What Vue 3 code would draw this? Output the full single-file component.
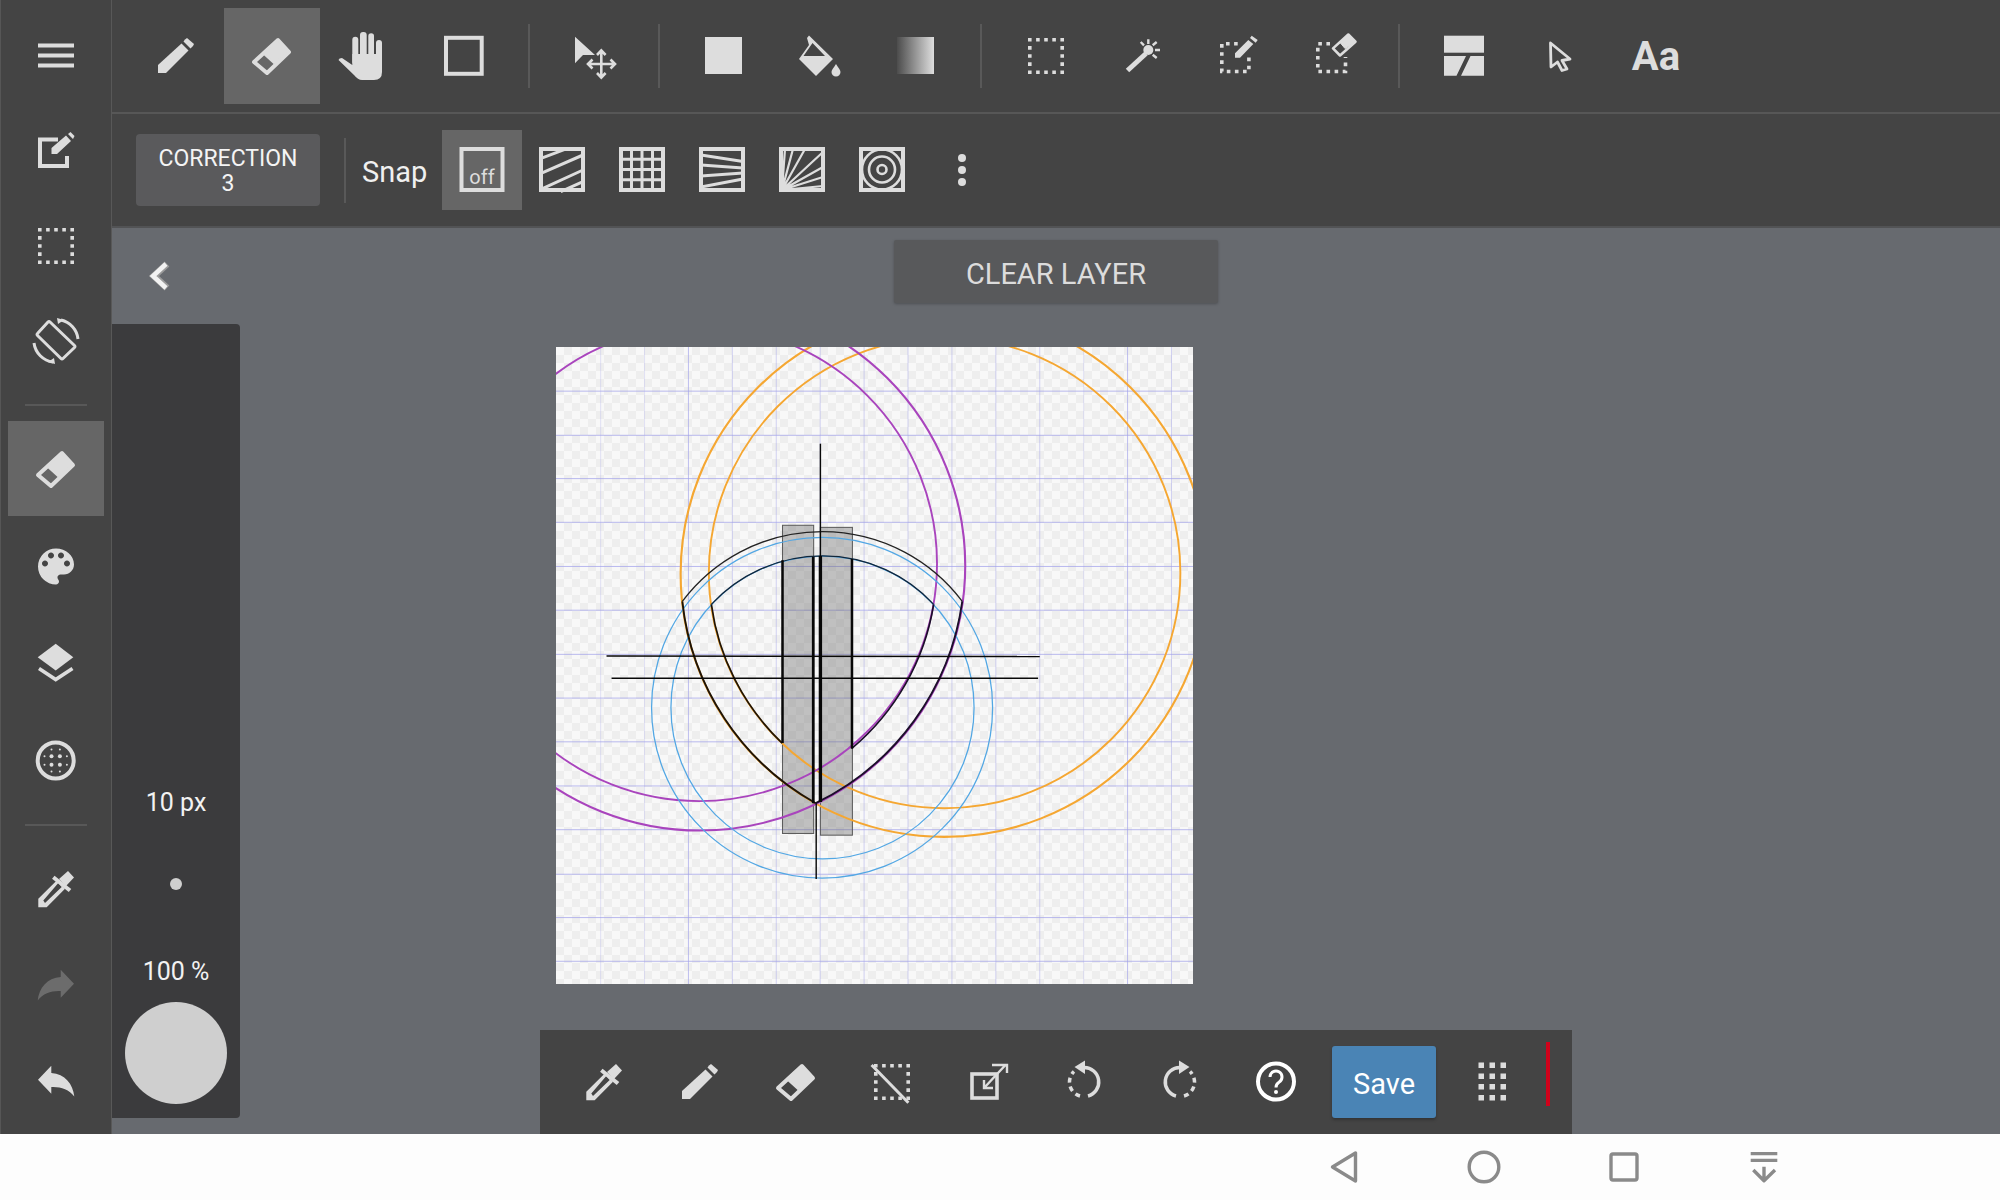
<script setup>
const topGroups = [
  [{ n: 'pencil' }, { n: 'eraser', on: true }, { n: 'hand' }, { n: 'square' }],
  [{ n: 'move' }],
  [{ n: 'fill' }, { n: 'bucket' }, { n: 'gradient' }],
  [{ n: 'dotted' }, { n: 'wand' }, { n: 'dotpen' }, { n: 'doteraser' }],
  [{ n: 'layout' }, { n: 'cursor' }],
]
const snaps = ['hatch', 'grid', 'persp', 'radial', 'rings', 'more']
const sideA = ['menu', 'edit', 'dotted', 'rotate']
const sideC = ['dropper', 'redo', 'undo']
const bottom = ['dropper', 'pencil', 'eraser', 'nosel', 'export', 'undoc', 'redoc', 'help']

// canvas guide lines, in the svg's own units
const vLines = [0, 1, 2, 3, 4, 5, 6, 7, 8, 9, 10, 11, 12, 13].map((i) => ({
  x: 144 + i * 104.3,
  o: i === 2 || i === 12 ? 0.75 : i === 0 || i === 1 || i === 11 ? 0.3 : 0.5,
}))
const hLines = [133, 238, 341, 445, 550, 654, 759, 863, 967, 1072, 1176, 1282, 1385, 1489]
</script>

<template>
  <div class="app">
    <svg class="defs" aria-hidden="true">
      <defs>
        <linearGradient id="grad">
          <stop offset="0" stop-color="#4c4c4c" />
          <stop offset="1" stop-color="#dedede" />
        </linearGradient>
        <g id="i-menu" fill="currentColor">
          <rect x="6" y="11.500" width="36" height="4" />
          <rect x="6" y="21.500" width="36" height="4" />
          <rect x="6" y="31.500" width="36" height="4" />
        </g>
        <g id="i-edit">
          <path d="M26 12.500H8V39H35V29" fill="none" stroke="currentColor" stroke-width="4" />
          <path d="M19.500 27V21L34 8.500 39 14 25 27ZM36 7l2.500-2 4 4-1.500 3Z" fill="currentColor" />
        </g>
        <g id="i-dotted">
          <rect x="7.800" y="7.800" width="32.400" height="32.400" fill="none" stroke="currentColor" stroke-width="3.600" stroke-dasharray="3.600 4.500" stroke-dashoffset="1.800" />
        </g>
        <g id="i-rotate" fill="none" stroke="currentColor" stroke-width="3">
          <path d="M18 5 42.500 28.500Q43.500 29.500 42.500 30.500L31 41.500Q30 42.500 29 41.500L5.500 18.500Q4.500 17.500 5.500 16.500L16 5Q17 4 18 5Z" />
          <path d="M29 3A22 22 0 0 1 46 22" />
          <path d="M2 26A22 22 0 0 0 21 45" />
          <path d="M25 1 32 3 26 7ZM23 47 16 45 22 41Z" fill="currentColor" stroke="none" />
        </g>
        <g id="i-palette" fill="currentColor">
          <path transform="translate(0 1.500) scale(2)" d="M12 3a9 9 0 0 0 0 18c.83 0 1.500-.67 1.500-1.500 0-.39-.15-.74-.39-1.010-.23-.26-.38-.61-.38-.99 0-.83.67-1.500 1.500-1.500H16c2.760 0 5-2.240 5-5 0-4.420-4.030-8-9-8zm-5.500 9c-.83 0-1.500-.67-1.500-1.500S5.670 9 6.500 9 8 9.670 8 10.500 7.330 12 6.500 12zm3-4C8.670 8 8 7.330 8 6.500S8.670 5 9.500 5s1.500.67 1.500 1.500S10.330 8 9.500 8zm5 0c-.83 0-1.500-.67-1.500-1.500S13.670 5 14.500 5s1.500.67 1.500 1.500S15.330 8 14.500 8zm3 4c-.83 0-1.500-.67-1.500-1.500S16.670 9 17.500 9s1.500.67 1.500 1.500-.67 1.500-1.500 1.500z" />
        </g>
        <g id="i-layers">
          <path d="M5.700 19.200 23.700 5.800 41.300 19.200 23.700 32.500Z" fill="currentColor" />
          <path d="M7 30.500 23.700 41.500 40.500 30.500" fill="none" stroke="currentColor" stroke-width="3.600" />
        </g>
        <g id="i-globe" fill="currentColor">
          <circle cx="23.700" cy="25.500" r="18" fill="none" stroke="currentColor" stroke-width="4" />
          <circle cx="19.500" cy="21.300" r="2" />
          <circle cx="27.900" cy="21.300" r="2" />
          <circle cx="19.500" cy="29.700" r="2" />
          <circle cx="27.900" cy="29.700" r="2" />
          <circle cx="12.500" cy="21.300" r="1" />
          <circle cx="12.500" cy="29.700" r="1" />
          <circle cx="34.900" cy="21.300" r="1" />
          <circle cx="34.900" cy="29.700" r="1" />
          <circle cx="19.500" cy="14.500" r="1" />
          <circle cx="27.900" cy="14.500" r="1" />
          <circle cx="19.500" cy="36.500" r="1" />
          <circle cx="27.900" cy="36.500" r="1" />
        </g>
        <g id="i-dropper">
          <path d="M6.300 33.800 24.700 15.500 33 23.800 14.700 42.200H6.300ZM11.300 35.500 13 38 29.700 22 26.300 18Z" fill="currentColor" fill-rule="evenodd" />
          <path d="M21.300 12.200 38 25.500" stroke="currentColor" stroke-width="4" />
          <path d="M27 14 36 6 42 12.500 34 21Z" fill="currentColor" />
        </g>
        <path id="i-redo" fill="currentColor" d="M42 23.800 28.700 9.800V17C15 18 7 28 5.700 40.500 11 33 20 30.500 28.700 31V37.800Z" />
        <g id="i-undo"><path fill="currentColor" transform="translate(48 1) scale(-1 1)" d="M42 23.800 28.700 9.800V17C15 18 7 28 5.700 40.500 11 33 20 30.500 28.700 31V37.800Z" /></g>
        <g id="i-pencil" fill="currentColor">
          <path d="M6 41V33L29.500 11.500 36.500 18.500 14 41Z" />
          <path d="M33 7.500 35 6 42 12 41 14 38.500 16.500 31.500 9.500Z" />
        </g>
        <g id="i-eraser">
          <path d="M30 8 41 20 19 41 6 30Z" fill="none" stroke="currentColor" stroke-width="4" stroke-linejoin="round" />
          <path d="M30 8 41 20 26 31 15 21Z" fill="currentColor" stroke="currentColor" stroke-width="2" stroke-linejoin="round" />
        </g>
        <g id="i-hand" fill="currentColor">
          <rect x="8.300" y="4.700" width="6" height="28" rx="3" />
          <rect x="16" y="0" width="6.700" height="28" rx="3" />
          <rect x="24.300" y="1.300" width="5.700" height="28" rx="2.800" />
          <rect x="32" y="8" width="6" height="28" rx="3" />
          <path d="M8.300 22H38V40Q38 48 30 48H18Q14 48 10 43L-5.500 28Q-5 26-2 26L8.300 33Z" />
        </g>
        <rect id="i-square" x="6" y="5.800" width="35.700" height="36" fill="none" stroke="currentColor" stroke-width="4" />
        <g id="i-move">
          <path d="M5 4.700 25 23H13L5 31.300Z" fill="currentColor" />
          <path d="M31.300 19V45M18 32H45M27 23 31.300 18.500 35.600 23M27 41 31.300 45.500 35.600 41M22.500 27.500 18 32 22.500 36.500M40.500 27.500 45 32 40.500 36.500" fill="none" stroke="currentColor" stroke-width="2.600" />
        </g>
        <rect id="i-fill" x="5" y="5" width="37" height="37" fill="currentColor" />
        <g id="i-bucket" fill="currentColor">
          <path fill-rule="evenodd" d="M11 6 13 3.500 37 27 20 44 3 27 13 13ZM16.500 11 29 24H7.500Z" />
          <path d="M40 32C42.500 36 44.500 38 44.500 40A4.500 4.500 0 0 1 35.500 40C35.500 38 37.500 36 40 32Z" />
        </g>
        <rect id="i-gradient" x="5" y="5" width="37" height="37" fill="url(#grad)" />
        <g id="i-wand" stroke="currentColor" fill="none">
          <path d="M9.500 38.500 28 21.500" stroke-width="5" />
          <circle cx="30.300" cy="18" r="5" fill="currentColor" stroke="none" />
          <path d="M30.300 7.300V12M37 18H42M22.700 10 26 13.300M34.700 13.300 38.700 10M34.700 22.700 38.700 26" stroke-width="2.400" />
        </g>
        <g id="i-dotpen">
          <path d="M23.700 11.800H7.800V39.500H34.900V25" fill="none" stroke="currentColor" stroke-width="3.600" stroke-dasharray="3.600 4.500" />
          <path d="M21 21.300V25.700H26L39.300 12 34.300 8ZM37.700 3.700 43.700 8 41.700 10.700 36 6Z" fill="currentColor" />
        </g>
        <g id="i-doteraser">
          <path d="M20 11.800H7.800V39.500H35.500V25" fill="none" stroke="currentColor" stroke-width="3.600" stroke-dasharray="3.600 4.500" />
          <path d="M38.300 2.500 45.500 9.700 30 23.500 23 16.400Z" fill="none" stroke="currentColor" stroke-width="2.600" stroke-linejoin="round" />
          <path d="M38.300 2.500 45.500 9.700 35 16.500 30 10.500Z" fill="currentColor" stroke="currentColor" stroke-width="1" stroke-linejoin="round" />
        </g>
        <g id="i-layout" fill="currentColor">
          <rect x="4" y="3.700" width="40" height="17" />
          <path d="M4 24H26L16.500 43.700H4ZM30.500 24H44V43.700H21Z" />
        </g>
        <path id="i-cursor" d="M14.500 11 34 27 26 28.500 31 37 26 38.500 21.500 30 15 35Z" fill="none" stroke="currentColor" stroke-width="2.800" stroke-linejoin="round" />
        <g id="i-hatch" fill="none" stroke="currentColor">
          <path d="M3 12.300 29.500 2.300M3 27.300 45 9M5 42.300 45 24M22.800 45.700 45 35.700" stroke-width="3" />
          <rect x="3" y="3" width="42" height="41" stroke-width="4" />
        </g>
        <g id="i-grid" fill="none" stroke="currentColor">
          <path d="M13.500 3V44M24 3V44M34.500 3V44M3 13.300H45M3 23.500H45M3 33.700H45" stroke-width="3" />
          <rect x="3" y="3" width="42" height="41" stroke-width="4" />
        </g>
        <g id="i-persp" fill="none" stroke="currentColor">
          <path d="M3 9 45 15.500M3 19 45 22M3 30 45 27M3 41 45 33" stroke-width="3" />
          <rect x="3" y="3" width="42" height="41" stroke-width="4" />
        </g>
        <g id="i-radial" fill="none" stroke="currentColor">
          <path d="M4 44 7 3M4 44 15 3M4 44 27 3M4 44 45 6M4 44 45 21M4 44 45 31M4 44 45 40" stroke-width="2.200" />
          <rect x="3" y="3" width="42" height="41" stroke-width="4" />
        </g>
        <g id="i-rings" fill="none" stroke="currentColor">
          <circle cx="24" cy="23.500" r="4.500" stroke-width="2.600" />
          <circle cx="24" cy="23.500" r="13" stroke-width="2.600" />
          <circle cx="24" cy="23.500" r="20" stroke-width="2.600" />
          <rect x="3" y="3" width="42" height="41" stroke-width="4" />
        </g>
        <g id="i-more" fill="currentColor">
          <circle cx="24" cy="12" r="4" />
          <circle cx="24" cy="24" r="4" />
          <circle cx="24" cy="36" r="4" />
        </g>
        <g id="i-nosel">
          <use href="#i-dotted" />
          <path d="M3.600 7 40.400 44.700" stroke="currentColor" stroke-width="3" />
        </g>
        <g id="i-export" fill="none" stroke="currentColor">
          <rect x="8" y="16" width="25" height="24" stroke-width="3.600" />
          <path d="M20 30 41.500 7M28 7H43V15M20 22V30H29" stroke-width="2.400" />
        </g>
        <g id="i-undoc">
          <path d="M24 9.500A14.500 14.500 0 0 1 28 38" fill="none" stroke="currentColor" stroke-width="3.500" />
          <path d="M20 38A14.500 14.500 0 0 1 14 13.500" fill="none" stroke="currentColor" stroke-width="3.500" stroke-dasharray="5 4" />
          <path d="M25 2.500V16L14.500 9Z" fill="currentColor" />
        </g>
        <g id="i-redoc"><use href="#i-undoc" transform="translate(48 0) scale(-1 1)" /></g>
        <g id="i-help" fill="none" stroke="#fff">
          <circle cx="24" cy="23.500" r="18" stroke-width="4" />
          <path d="M18 19A6 6 0 1 1 27 24.200C25 25.400 24 26.700 24 29.500" stroke-width="3" />
          <circle cx="24" cy="34" r="2" fill="#fff" stroke="none" />
        </g>
        <g id="i-grip" fill="currentColor">
          <rect x="10.500" y="4.500" width="5.500" height="5.500" /><rect x="21.500" y="4.500" width="5.500" height="5.500" /><rect x="32.500" y="4.500" width="5.500" height="5.500" />
          <rect x="10.500" y="15.500" width="5.500" height="5.500" /><rect x="21.500" y="15.500" width="5.500" height="5.500" /><rect x="32.500" y="15.500" width="5.500" height="5.500" />
          <rect x="10.500" y="26" width="5.500" height="5.500" /><rect x="21.500" y="26" width="5.500" height="5.500" /><rect x="32.500" y="26" width="5.500" height="5.500" />
          <rect x="10.500" y="37" width="5.500" height="5.500" /><rect x="21.500" y="37" width="5.500" height="5.500" /><rect x="32.500" y="37" width="5.500" height="5.500" />
        </g>
      </defs>
    </svg>

    <div class="main">
      <aside class="side">
        <div v-for="n in sideA" :key="n" class="side-slot">
          <svg class="ico" viewBox="0 0 48 48"><use :href="'#i-' + n" /></svg>
        </div>
        <div class="side-rule first"></div>
        <div class="side-slot on">
          <svg class="ico" viewBox="0 0 48 48"><use href="#i-eraser" /></svg>
        </div>
        <div v-for="n in ['palette', 'layers', 'globe']" :key="n" class="side-slot tall">
          <svg class="ico" viewBox="0 0 48 48"><use :href="'#i-' + n" /></svg>
        </div>
        <div class="side-rule second"></div>
        <div v-for="n in sideC" :key="n" class="side-slot" :class="{ dim: n === 'redo' }">
          <svg class="ico" viewBox="0 0 48 48"><use :href="'#i-' + n" /></svg>
        </div>
      </aside>

      <div class="work">
        <div class="bar">
          <template v-for="(group, i) in topGroups" :key="i">
            <div v-if="i > 0" class="bar-rule"></div>
            <div v-for="t in group" :key="t.n" class="tool" :class="{ on: t.on }">
              <svg class="ico" viewBox="0 0 48 48"><use :href="'#i-' + t.n" /></svg>
            </div>
          </template>
          <div class="tool font-tool">Aa</div>
        </div>

        <div class="bar second">
          <div class="correction">CORRECTION<br />3</div>
          <div class="second-rule"></div>
          <span class="snap-label">Snap</span>
          <div class="snap on">
            <svg class="ico" viewBox="0 0 48 48">
              <rect x="3.500" y="3" width="41" height="41" fill="none" stroke="currentColor" stroke-width="4" />
              <text x="24" y="38" class="off-text">off</text>
            </svg>
          </div>
          <div v-for="n in snaps" :key="n" class="snap">
            <svg class="ico" viewBox="0 0 48 48"><use :href="'#i-' + n" /></svg>
          </div>
        </div>

        <div class="stage">
          <div class="brush-col">
            <div class="back">
              <svg width="24" height="32" viewBox="0 0 24 32">
                <polyline points="20,4 7,16 20,28" fill="none" stroke="#9a9a9a" stroke-width="7" />
                <polyline points="19,4 6,16 19,28" fill="none" stroke="#f2f2f2" stroke-width="4.500" />
              </svg>
            </div>
            <div class="brush">
              <div class="brush-label">10 px</div>
              <div class="brush-dot"></div>
              <div class="brush-label alpha">100 %</div>
              <div class="brush-big"></div>
            </div>
          </div>

          <div class="area">
            <div class="clear">CLEAR LAYER</div>

            <div class="canvas">
              <svg class="sheet" viewBox="38 28 1513 1515" preserveAspectRatio="none">
                <line v-for="l in vLines" :key="l.x" :x1="l.x" :x2="l.x" y1="28" y2="1543" stroke="#a4a4ea" stroke-width="2.200" :opacity="l.o" />
                <line v-for="y in hLines" :key="y" x1="38" x2="1551" :y1="y" :y2="y" stroke="#a4a4ea" stroke-width="2.200" opacity="0.8" />

                <g fill="rgba(95,95,95,0.36)" stroke="#5c5c5c" stroke-width="2.500">
                  <rect x="576" y="452" width="74" height="733" />
                  <rect x="666" y="457" width="76" height="732" />
                </g>

                <g fill="none">
                  <circle cx="960" cy="567" r="626" stroke="#f5a732" stroke-width="5" />
                  <circle cx="961" cy="565" r="560" stroke="#f5a732" stroke-width="4.500" />
                  <circle cx="380" cy="548" r="630" stroke="#a944bd" stroke-width="5" />
                  <circle cx="378" cy="543" r="565" stroke="#a944bd" stroke-width="4.500" />
                  <circle cx="670" cy="886" r="405" stroke="#52a7e4" stroke-width="3" />
                  <circle cx="671" cy="885.500" r="360" stroke="#52a7e4" stroke-width="3" />

                  <path d="M338 633A416 416 0 0 1 1003 633" stroke="#222" stroke-width="3" />
                  <path d="M407 640A360 360 0 0 1 935 640" stroke="#12263a" stroke-width="3" />
                  <path d="M338 633A626 626 0 0 0 655 1113" stroke="#1e1408" stroke-width="4.500" />
                  <path d="M1003 633A630 630 0 0 1 655 1113" stroke="#1c0f2a" stroke-width="4.500" />
                  <path d="M407 640A560 560 0 0 0 575 970" stroke="#1e1408" stroke-width="4" />
                  <path d="M935 640A565 565 0 0 1 740 983" stroke="#1c0f2a" stroke-width="4" />
                </g>

                <g stroke="#080808">
                  <line x1="576" x2="576" y1="535" y2="970" stroke-width="6" />
                  <line x1="649" x2="649" y1="527" y2="1113" stroke-width="6.500" />
                  <line x1="666" x2="666" y1="525" y2="1110" stroke-width="8" />
                  <line x1="741" x2="741" y1="532" y2="983" stroke-width="6" />
                  <line x1="666" x2="666" y1="258" y2="525" stroke-width="3.400" />
                  <line x1="656" x2="656" y1="1113" y2="1293" stroke-width="3.400" />
                  <line x1="158" x2="1187" y1="763" y2="764" stroke-width="3.600" />
                  <line x1="170" x2="1183" y1="816" y2="816" stroke-width="3.600" />
                </g>
              </svg>
            </div>

            <div class="tray">
              <div v-for="n in bottom" :key="n" class="tool tray-tool">
                <svg class="ico" viewBox="0 0 48 48"><use :href="'#i-' + n" /></svg>
              </div>
              <div class="save">Save</div>
              <div class="tool tray-tool grip">
                <svg class="ico" viewBox="0 0 48 48"><use href="#i-grip" /></svg>
              </div>
              <div class="red"></div>
            </div>
          </div>
        </div>
      </div>
    </div>

    <nav class="nav">
      <svg class="nav-ico" viewBox="0 0 48 48"><path d="M35.500 10V38L12.500 24Z" /></svg>
      <svg class="nav-ico" viewBox="0 0 48 48"><circle cx="24" cy="24" r="14.800" /></svg>
      <svg class="nav-ico" viewBox="0 0 48 48"><rect x="11" y="11" width="26" height="26" rx="2" /></svg>
      <svg class="nav-ico" viewBox="0 0 48 48"><path d="M10.700 10.600H37.300M10.700 17.400H37.300M24 23.700V38.500M13.300 27 24 37.700 35 27" /></svg>
    </nav>
  </div>
</template>

<style>
html, body {
  margin: 0;
  background: #fdfdfd;
}
</style>

<style scoped>
.app {
  width: 2000px;
  height: 1200px;
  display: flex;
  flex-direction: column;
  overflow: hidden;
  font-family: Roboto, "Noto Sans", sans-serif;
  color: #ddd;
}
.defs {
  position: absolute;
  width: 0;
  height: 0;
}
.main {
  flex: none;
  height: 1134px;
  display: flex;
}
.ico {
  width: 48px;
  height: 48px;
  overflow: visible;
  color: #ddd;
  display: block;
}

.side {
  flex: none;
  width: 112px;
  box-sizing: border-box;
  padding: 8px 8px 0;
  background: #444;
  border-right: 1px solid #585858;
  box-shadow: inset 1px 0 #565656;
}
.side-slot {
  width: 96px;
  height: 95px;
  display: flex;
  align-items: center;
  justify-content: center;
}
.side-slot.tall {
  height: 97px;
}
.side-slot.on {
  background: #666;
}
.side-slot.dim .ico {
  color: #6c6c6c;
}
.side-rule {
  width: 62px;
  height: 2px;
  margin-left: 17px;
  background: #585858;
}
.side-rule.first {
  margin-top: 16px;
  margin-bottom: 15px;
}
.side-rule.second {
  margin-top: 17px;
  margin-bottom: 15px;
}

.work {
  flex: 1;
  display: flex;
  flex-direction: column;
  min-width: 0;
}
.bar {
  flex: none;
  height: 112px;
  display: flex;
  align-items: center;
  padding-left: 16px;
  background: #444;
  border-bottom: 2px solid #575757;
}
.bar.second {
  padding-left: 24px;
  border-bottom-color: #525355;
}
.tool {
  flex: none;
  width: 96px;
  height: 96px;
  display: flex;
  align-items: center;
  justify-content: center;
}
.tool.on {
  background: #666;
}
.bar-rule {
  flex: none;
  width: 2px;
  height: 64px;
  margin: 0 16px;
  background: #595959;
}
.font-tool {
  font-size: 40px;
  font-weight: 700;
  color: #ddd;
}

.correction {
  flex: none;
  width: 184px;
  height: 72px;
  box-sizing: border-box;
  padding-top: 12px;
  border-radius: 4px;
  background: #5a5a5c;
  text-align: center;
  font-size: 23px;
  line-height: 25px;
  color: #f4f4f4;
}
.second-rule {
  flex: none;
  width: 2px;
  height: 65px;
  margin: 0 16px 0 24px;
  background: #595959;
}
.snap-label {
  flex: none;
  width: 80px;
  padding-top: 3px;
  font-size: 29px;
  color: #f0f0f0;
}
.snap {
  flex: none;
  width: 80px;
  height: 80px;
  display: flex;
  align-items: center;
  justify-content: center;
}
.snap.on {
  background: #666;
}
.off-text {
  font-size: 20px;
  fill: #ddd;
  text-anchor: middle;
}

.stage {
  flex: 1;
  display: flex;
  background: #676a6f;
  min-height: 0;
}
.brush-col {
  flex: none;
  width: 128px;
  display: flex;
  flex-direction: column;
}
.back {
  flex: none;
  height: 96px;
  padding-left: 35px;
  display: flex;
  align-items: center;
}
.brush {
  flex: none;
  height: 794px;
  box-sizing: border-box;
  padding-top: 464px;
  border-radius: 0 4px 4px 0;
  background: #3b3b3d;
  display: flex;
  flex-direction: column;
  align-items: center;
}
.brush-label {
  height: 30px;
  font-size: 25px;
  line-height: 30px;
  color: #f2f2f2;
}
.brush-label.alpha {
  margin-top: 67px;
}
.brush-dot {
  width: 12px;
  height: 12px;
  margin-top: 60px;
  border-radius: 50%;
  background: #cfcfcf;
}
.brush-big {
  width: 102px;
  height: 102px;
  margin-top: 15px;
  border-radius: 50%;
  background: #cfcfcf;
}

.area {
  flex: 1;
  display: flex;
  flex-direction: column;
  align-items: flex-start;
}
.clear {
  width: 324px;
  height: 63px;
  margin: 12px 0 0 654px;
  border-radius: 2px;
  background: #58595b;
  box-shadow: 0 1px 3px rgba(0, 0, 0, 0.25);
  text-align: center;
  line-height: 68px;
  font-size: 29px;
  color: #dcdcdc;
}
.canvas {
  width: 637px;
  height: 637px;
  margin: 44px 0 0 316px;
  background: repeating-conic-gradient(#eeeeee 0 25%, #f8f8f8 0 50%) 0 0 / 16px 16px;
}
.sheet {
  width: 100%;
  height: 100%;
  display: block;
}
.tray {
  width: 1032px;
  height: 104px;
  box-sizing: border-box;
  margin: 46px 0 0 300px;
  padding-left: 16px;
  display: flex;
  align-items: center;
  background: #444;
}
.save {
  flex: none;
  width: 104px;
  height: 72px;
  margin-left: 8px;
  border-radius: 3px;
  background: #4a84b5;
  box-shadow: 0 2px 3px rgba(0, 0, 0, 0.25);
  color: #fff;
  text-align: center;
  line-height: 76px;
  font-size: 29px;
}
.grip {
  margin-left: 8px;
}
.red {
  flex: none;
  align-self: flex-start;
  width: 4px;
  height: 64px;
  margin: 12px 0 0 6px;
  background: #d0021b;
}

.nav {
  flex: 1;
  display: flex;
  justify-content: flex-end;
  align-items: center;
  gap: 92px;
  padding-right: 212px;
  background: #fdfdfd;
}
.nav-ico {
  width: 48px;
  height: 48px;
  fill: none;
  stroke: #8a8a8a;
  stroke-width: 3.400;
  stroke-linejoin: round;
}
</style>
